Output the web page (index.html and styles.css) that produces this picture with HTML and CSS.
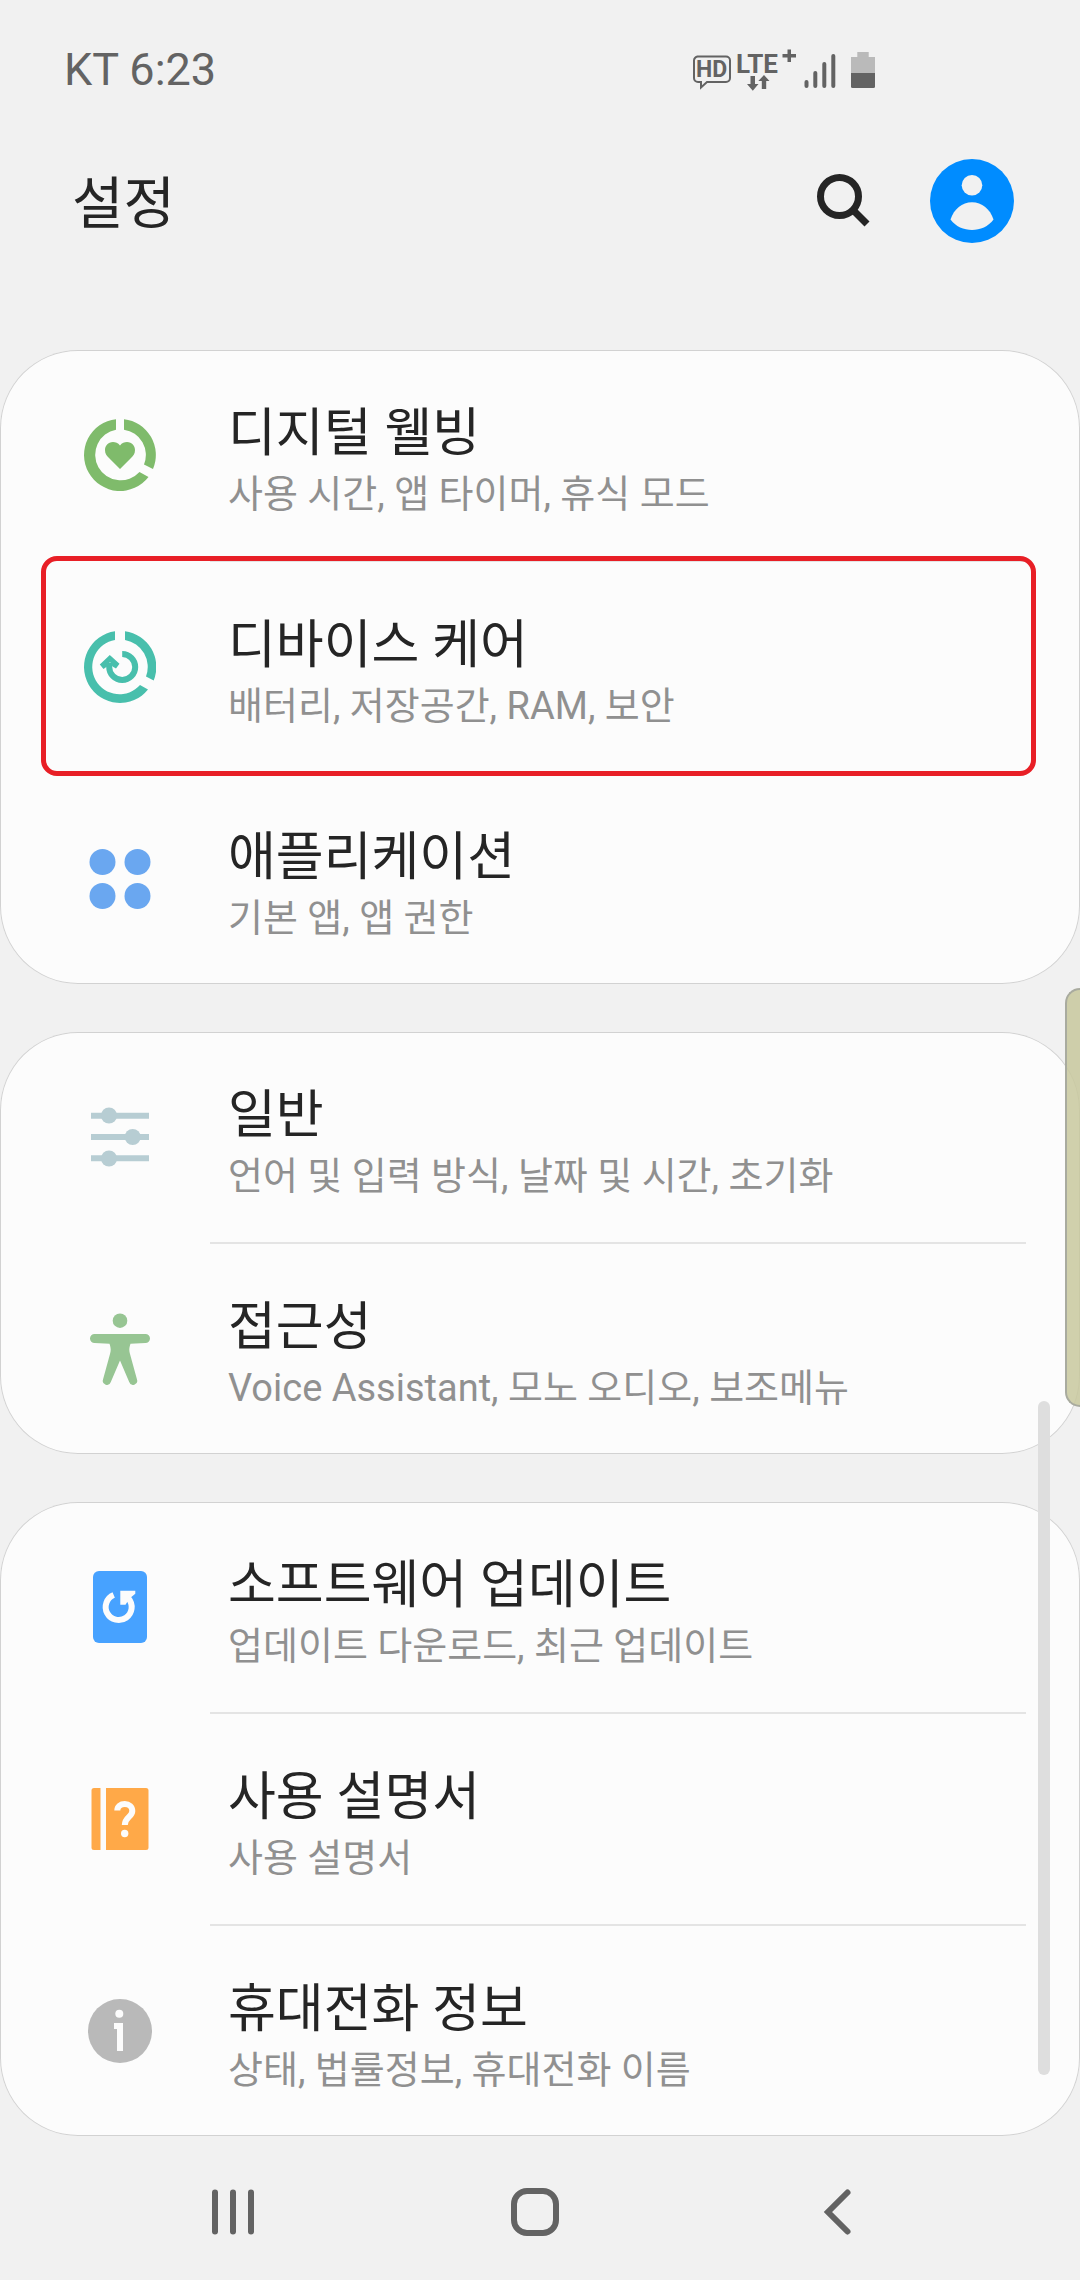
FILE: index.html
```html
<!DOCTYPE html>
<html lang="ko">
<head>
<meta charset="utf-8">
<meta name="viewport" content="width=device-width, initial-scale=1">
<title>설정</title>
<link rel="stylesheet" href="styles.css">
</head>
<body>
<div class="status-bar">
  <span class="carrier">KT 6:23</span>
  <svg class="status-icons" viewBox="0 0 184 44" aria-hidden="true">
    <path class="line" d="M5 8.500H34a4 4 0 0 1 4 4V30a4 4 0 0 1-4 4H15l-6 5.500V34H6a4 4 0 0 1-4-4V12.500a4 4 0 0 1 4-4Z"/>
    <text class="hd" x="4" y="29">HD</text>
    <text class="lte" x="44" y="25">LTE</text>
    <path d="M95.500 1.500h3.500v4.500h5v3.500h-5v4.500h-3.500V9.500h-5V6h5z"/>
    <path d="M58.500 28h4.500v8h3.500l-5.700 6.700-5.800-6.700h3.500zM69.800 41v-8h-3.500L72 27l5.500 6h-3.300v8z"/>
    <rect x="112.500" y="32" width="4" height="8" rx="2"/>
    <rect x="121.300" y="23" width="4" height="17" rx="2"/>
    <rect x="130.300" y="14" width="4" height="26" rx="2"/>
    <rect x="139.300" y="6" width="4" height="34" rx="2"/>
    <path class="battery-empty" d="M165.300 4h11.400v5H183v16h-24V9h6.300z"/>
    <path d="M159 25h24v13.500a1.500 1.500 0 0 1-1.500 1.500h-21a1.500 1.500 0 0 1-1.500-1.500z"/>
  </svg>
</div>

<header class="app-bar">
  <h1 class="app-title">설정</h1>
  <button class="icon-button" type="button" aria-label="검색">
    <svg class="search-icon" viewBox="0 0 54 54"><circle cx="23.500" cy="22.500" r="19"/><path d="M36.500 35.500 51 50"/></svg>
  </button>
  <button class="icon-button" type="button" aria-label="계정">
    <svg class="avatar" viewBox="-42 -42 84 84"><circle class="avatar-disc" r="42"/><circle cy="-15.700" r="10.300"/><path d="M-21.500 18.500C-18 8-10 1.300 0 1.300S18 8 21.500 18.500C16.500 25.500 8 29 0 29S-16.500 25.500-21.500 18.500Z"/></svg>
  </button>
</header>

<main class="settings">
  <section class="card">
    <a class="row" href="#wellbeing">
      <svg class="row-icon green" viewBox="-36 -36 72 72" aria-hidden="true">
        <path d="M4-35.800A36 36 0 0 1 33 14L24 9.500A25.500 25.500 0 0 0 4-25.300ZM28.500 22A36 36 0 1 1-4-35.800V-25.300A25.500 25.500 0 1 0 19.500 17Z"/>
        <path d="M0-9.500C-2-12.300-4.500-13-7-13-12-13-15-9-15-5-15-1.500-13.500.5-11 3L0 14 11 3C13.500.5 15-1.500 15-5 15-9 12-13 7-13 4.500-13 2-12.300 0-9.500Z"/>
      </svg>
      <span class="row-text"><span class="row-title">디지털 웰빙</span><span class="row-sub">사용 시간, 앱 타이머, 휴식 모드</span></span>
    </a>
    <a class="row highlighted" href="#device-care">
      <svg class="row-icon teal" viewBox="-36 -36 72 72" aria-hidden="true">
        <path d="M5-35.700A36 36 0 0 1 33.700 13.500L26 9.500A27.300 27.300 0 0 0 5-27ZM28 22.600A36 36 0 1 1-5-35.700V-27A27.300 27.300 0 1 0 20 18Z"/>
        <path class="arc" d="M2.200-13A13 13 0 1 1-10.800 0V-4"/>
        <path d="M-10.200-12-.5-3.300-4 1.500-7.500-.5-10-5-13-.5-16.500 2-20.200-2.500Z"/>
      </svg>
      <span class="row-text"><span class="row-title">디바이스 케어</span><span class="row-sub">배터리, 저장공간, RAM, 보안</span></span>
    </a>
    <a class="row" href="#apps">
      <svg class="row-icon blue" viewBox="-36 -36 72 72" aria-hidden="true">
        <circle cx="-17.500" cy="-17" r="13"/><circle cx="17.500" cy="-17" r="13"/><circle cx="-17.500" cy="17" r="13"/><circle cx="17.500" cy="17" r="13"/>
      </svg>
      <span class="row-text"><span class="row-title">애플리케이션</span><span class="row-sub">기본 앱, 앱 권한</span></span>
    </a>
  </section>

  <section class="card">
    <a class="row" href="#general">
      <svg class="row-icon slate" viewBox="-36 -36 72 72" aria-hidden="true">
        <path d="M-29-24.300h58v6h-58zM-29-3h58v6h-58zM-29 18.300h58v6h-58z"/>
        <circle cx="-11" cy="-21.500" r="8"/><circle cx="12.700" r="8"/><circle cx="-11" cy="21.500" r="8"/>
      </svg>
      <span class="row-text"><span class="row-title">일반</span><span class="row-sub">언어 및 입력 방식, 날짜 및 시간, 초기화</span></span>
    </a>
    <a class="row" href="#accessibility">
      <svg class="row-icon sage" viewBox="-36 -36 72 72" aria-hidden="true">
        <circle cy="-28.300" r="7.300"/>
        <path d="M-25.500-15H25.500a4.500 4.500 0 0 1 0 9L10.500-5.300C9-1 9 2 10 5L17 30.500a4 4 0 0 1-7.800 2.500L0 11.500-9.200 33a4 4 0 0 1-7.800-2.500L-10 5C-9 2-9-1-10.500-5.300L-25.500-6a4.500 4.500 0 0 1 0-9Z"/>
      </svg>
      <span class="row-text"><span class="row-title">접근성</span><span class="row-sub">Voice Assistant, 모노 오디오, 보조메뉴</span></span>
    </a>
  </section>

  <section class="card">
    <a class="row" href="#update">
      <svg class="row-icon azure" viewBox="-36 -36 72 72" aria-hidden="true">
        <rect x="-27" y="-36" width="54" height="72" rx="6"/>
        <path class="arc-light" d="M-6.300-12A13 13 0 1 0 8.500-8.500"/>
        <path class="light" d="M.3-16.300H15.300V-13.300L9.500-8.500 5.500-2.300H.3Z"/>
      </svg>
      <span class="row-text"><span class="row-title">소프트웨어 업데이트</span><span class="row-sub">업데이트 다운로드, 최근 업데이트</span></span>
    </a>
    <a class="row" href="#manual">
      <svg class="row-icon orange" viewBox="-36 -36 72 72" aria-hidden="true">
        <path d="M-19.500-31v62H-26a2.500 2.500 0 0 1-2.500-2.500v-57A2.500 2.500 0 0 1-26-31ZM-14-31H26a2.500 2.500 0 0 1 2.500 2.500v57A2.500 2.500 0 0 1 26 31H-14Z"/>
        <path class="arc-light" d="M-2.700-8.500C-2.700-12.500.5-15 4.800-15S12.300-12.300 12.300-8C12.300-2 4.800-2 4.800 6"/>
        <circle class="light" cx="4.700" cy="14.500" r="3.700"/>
      </svg>
      <span class="row-text"><span class="row-title">사용 설명서</span><span class="row-sub">사용 설명서</span></span>
    </a>
    <a class="row" href="#about">
      <svg class="row-icon gray" viewBox="-36 -36 72 72" aria-hidden="true">
        <circle r="32"/><circle class="light" cx="-.7" cy="-17.300" r="4"/><path class="light" d="M-6-8H3V20H-3V-2H-6Z"/>
      </svg>
      <span class="row-text"><span class="row-title">휴대전화 정보</span><span class="row-sub">상태, 법률정보, 휴대전화 이름</span></span>
    </a>
  </section>
  <div class="scroll-thumb"></div>
  <div class="edge-handle"></div>
</main>

<nav class="nav-bar">
  <button class="nav-button" type="button" aria-label="최근 앱"><svg class="nav-icon" viewBox="-24 -24 48 48"><path d="M-18-19.500v39M0-19.500v39M18-19.500v39"/></svg></button>
  <button class="nav-button" type="button" aria-label="홈"><svg class="nav-icon" viewBox="-24 -24 48 48"><rect x="-21" y="-21" width="42" height="42" rx="13"/></svg></button>
  <button class="nav-button" type="button" aria-label="뒤로"><svg class="nav-icon" viewBox="-24 -24 48 48"><path d="M10.500-19.500-9 0 10.500 19.500"/></svg></button>
</nav>
</body>
</html>
```
FILE: styles.css
```css
* {
  box-sizing: border-box;
}

body {
  margin: 0;
  min-height: 100vh;
  background: #f1f1f1;
  color: #252525;
  font-family: Roboto, "Noto Sans CJK KR", sans-serif;
  overflow-x: hidden;
}

button {
  margin: 0;
  padding: 0;
  border: 0;
  background: none;
}

svg {
  display: block;
}

.status-bar {
  display: flex;
  align-items: center;
  justify-content: space-between;
  height: 144px;
  padding: 0 204px 4px 64px;
  color: #636363;
}

.carrier {
  font-size: 45px;
  line-height: 56px;
}

.status-icons {
  width: 184px;
  height: 44px;
  fill: #636363;
  font-weight: 700;
}

.status-icons .line {
  fill: none;
  stroke: #636363;
  stroke-width: 2;
}

.status-icons .battery-empty {
  fill: #bababa;
}

.hd {
  font-size: 23px;
}

.lte {
  font-size: 26px;
}

.app-bar {
  display: flex;
  align-items: center;
  gap: 60px;
  height: 114px;
  padding: 0 66px 0 72px;
}

.app-title {
  flex: 1;
  margin: 0;
  padding-top: 6px;
  font-size: 56px;
  line-height: 84px;
  font-weight: 400;
}

.search-icon {
  width: 54px;
  height: 54px;
  fill: none;
  stroke: #252525;
  stroke-width: 7;
}

.avatar {
  width: 84px;
  height: 84px;
  fill: #f1f1f1;
}

.avatar-disc {
  fill: #008cff;
}

.settings {
  position: relative;
  display: flex;
  flex-direction: column;
  gap: 48px;
  margin-top: 92px;
}

.card {
  border-radius: 78px;
  background: #fcfcfc;
  box-shadow: inset 0 0 0 1px #d2d2d2;
}

.row {
  position: relative;
  display: flex;
  align-items: center;
  gap: 72px;
  height: 210px;
  padding: 0 54px 0 84px;
  color: inherit;
  text-decoration: none;
}

.row + .row {
  margin-top: 2px;
}

.row + .row::before {
  content: "";
  position: absolute;
  top: -2px;
  left: 210px;
  right: 54px;
  height: 2px;
  background: #e4e4e4;
}

/* red frame drawn over the neighbouring dividers */
.highlighted::after {
  content: "";
  position: absolute;
  z-index: 1;
  inset: -6px 44px -4px 41px;
  border: 5px solid #e81f26;
  border-radius: 16px;
}

.row-icon {
  flex: none;
  width: 72px;
  height: 72px;
  fill: currentColor;
}

.arc,
.arc-light {
  fill: none;
  stroke: currentColor;
  stroke-width: 6;
}

.arc-light {
  stroke: #fcfcfc;
}

.light {
  fill: #fcfcfc;
}

.green { color: #7fbb6b; }
.teal { color: #48bfac; }
.blue { color: #6aa7f0; }
.slate { color: #b7cdd3; }
.sage { color: #97c593; }
.azure { color: #47a2ff; }
.orange { color: #ffa948; }
.gray { color: #b9b9b9; }

.row-text {
  display: flex;
  flex-direction: column;
  padding-top: 8px;
}

.row-title {
  font-size: 52px;
  line-height: 70px;
}

.row-sub {
  color: #909090;
  font-size: 38px;
  line-height: 50px;
}

.scroll-thumb {
  position: absolute;
  right: 30px;
  bottom: 61px;
  width: 12px;
  height: 674px;
  border-radius: 6px;
  background: #dedede;
}

.edge-handle {
  position: absolute;
  top: 638px;
  right: 0;
  width: 15px;
  height: 419px;
  border: 2px solid #a9ab9f;
  border-right: 0;
  border-radius: 16px 0 0 16px;
  background: rgba(200, 200, 158, 0.85);
}

.nav-bar {
  display: grid;
  grid-template-columns: repeat(3, 1fr);
  height: 136px;
  margin-top: 8px;
  padding: 0 92px 0 82px;
}

.nav-button {
  display: flex;
  align-items: center;
  justify-content: center;
}

.nav-icon {
  width: 48px;
  height: 48px;
  fill: none;
  stroke: #636363;
  stroke-width: 6;
  stroke-linecap: round;
}
```
